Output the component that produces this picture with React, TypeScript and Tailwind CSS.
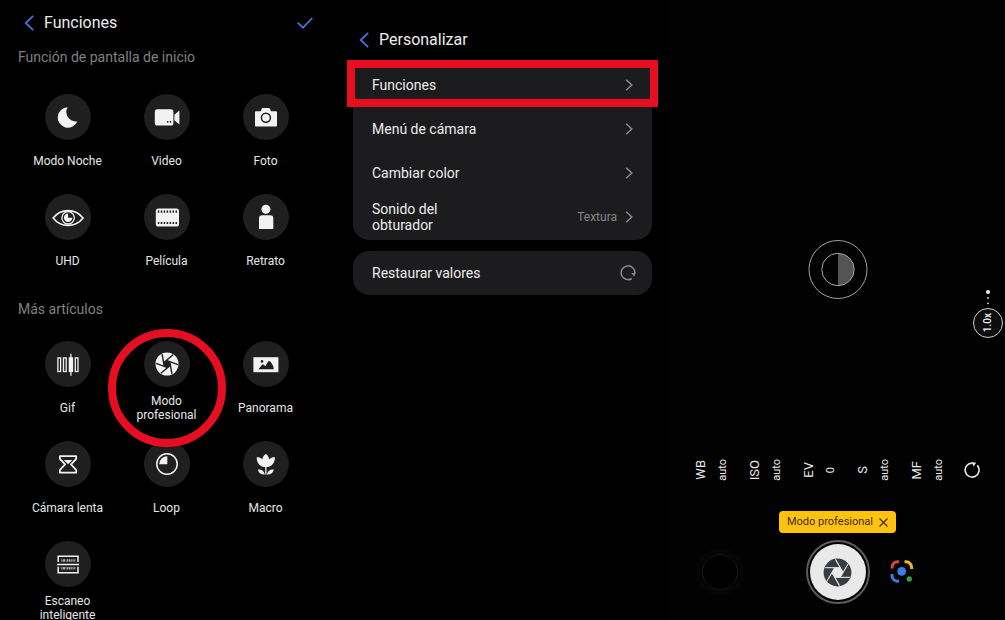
import type { ReactNode } from 'react';

const INK = '#f2f2f2';
const DISC = '#1f1f1f';

function Glyph({ children }: { children: ReactNode }) {
  return (
    <svg viewBox="0 0 46 46" className="size-[46px]" fill={INK} aria-hidden="true">
      {children}
    </svg>
  );
}

const SIXTHS = [0, 60, 120, 180, 240, 300];

type ApertureProps = { size: number; ink: string; gap: string; hole: number; line: number; turn: string };

function Aperture({ size, ink, gap, hole, line, turn }: ApertureProps) {
  const h = hole * 0.866;
  return (
    <svg viewBox="-12 -12 24 24" width={size} height={size} aria-hidden="true">
      <circle r="11.5" fill={ink} />
      <g transform={turn}>
        <polygon
          fill={gap}
          points={SIXTHS.map((a) => {
            const t = ((a + 30) * Math.PI) / 180;
            return `${hole * Math.cos(t)},${hole * Math.sin(t)}`;
          }).join(' ')}
        />
        {SIXTHS.map((a) => (
          <line
            key={a}
            x1={-h}
            y1={hole / 2}
            x2={-h}
            y2={-Math.sqrt(11 * 11 - h * h)}
            stroke={gap}
            strokeWidth={line}
            transform={`rotate(${a})`}
          />
        ))}
      </g>
    </svg>
  );
}

const icons: Record<string, ReactNode> = {
  moon: (
    <Glyph>
      <path d="M22.6 13.3A10.2 10.2 0 1 0 32.4 27.2A9.4 9.4 0 0 1 22.6 13.3Z" />
    </Glyph>
  ),
  video: (
    <Glyph>
      <rect x="10.8" y="15.3" width="18.6" height="16.2" rx="2.6" />
      <path d="M30.4 20.8L35.4 16.6V30.4L30.4 26.2Z" />
      <circle cx="23.7" cy="27.8" r="0.9" fill={DISC} />
      <circle cx="26.5" cy="27.8" r="0.9" fill={DISC} />
    </Glyph>
  ),
  camera: (
    <Glyph>
      <path d="M13 17.2H17.6L18.8 14.6Q19 14 19.7 14H25.8Q26.5 14 26.8 14.6L28 17.2H33Q34 17.2 34 18.2V31.4Q34 32.4 33 32.4H13Q12 32.4 12 31.4V18.2Q12 17.2 13 17.2Z" />
      <circle cx="22.9" cy="23.8" r="4.5" fill="none" stroke={DISC} strokeWidth="1.5" />
    </Glyph>
  ),
  eye: (
    <Glyph>
      <path
        d="M8.2 24C12 19 17 16.6 23.1 16.6C29.2 16.6 34.2 19 38 24C34.2 29 29.2 31.4 23.1 31.4C17 31.4 12 29 8.2 24Z"
        fill="none"
        stroke={INK}
        strokeWidth="1.6"
      />
      <circle cx="23.1" cy="23.8" r="6.2" fill="none" stroke={INK} strokeWidth="1.3" />
      <path d="M23.1 23.8V19.6A4.2 4.2 0 1 0 27.3 23.8Z" />
    </Glyph>
  ),
  film: (
    <Glyph>
      <rect x="11.8" y="14.4" width="23.2" height="18.2" rx="2.6" />
      <path d="M13.8 17.7H33.2M13.8 29H33.2" stroke={DISC} strokeWidth="2.2" strokeDasharray="1.5 1.45" />
    </Glyph>
  ),
  person: (
    <Glyph>
      <circle cx="22.9" cy="15.3" r="4.5" />
      <path d="M16 35V24.3Q16 21.3 19 21.3H27.3Q30.3 21.3 30.3 24.3V35Z" />
    </Glyph>
  ),
  frames: (
    <Glyph>
      <g fill="none" stroke={INK} strokeWidth="1.3">
        <rect x="12.9" y="16.9" width="2.7" height="13.6" />
        <rect x="18.5" y="16.9" width="2.7" height="13.6" />
        <rect x="30.3" y="16.9" width="2.7" height="13.6" />
        <path d="M25.9 12.7V34.7" />
      </g>
      <rect x="23.7" y="16.3" width="4.4" height="14.8" />
    </Glyph>
  ),
  aperture: <Aperture size={24} ink={INK} gap={DISC} hole={3.6} line={1.4} turn="rotate(-10)" />,
  panorama: (
    <Glyph>
      <rect x="10.4" y="16.2" width="25" height="15" />
      <path
        d="M15.4 28.3L19.2 23.8Q20 23 20.8 23.8L22.2 25.2L25 20.8Q26 19.5 27.4 20.5L29.4 23.5Q30.5 25.5 30.8 28.3Z"
        fill={DISC}
      />
      <circle cx="19" cy="20.4" r="1.3" fill={DISC} />
    </Glyph>
  ),
  hourglass: (
    <Glyph>
      <path
        d="M14.9 15.2H31.2V17.8L26 23.4L31.2 29V31.6H14.9V29L20.1 23.4L14.9 17.8Z"
        fill="none"
        stroke={INK}
        strokeWidth="1.8"
        strokeLinejoin="round"
      />
      <path d="M18.8 19H27.3L23.05 23.2Z" />
    </Glyph>
  ),
  loop: (
    <Glyph>
      <circle cx="23" cy="23" r="10.2" fill="none" stroke={INK} strokeWidth="1.5" />
      <path d="M23.3 23.3H15.2A8 8 0 0 1 23.3 15.3Z" />
    </Glyph>
  ),
  flower: (
    <Glyph>
      <path d="M22.8 13C24.8 14.4 25.9 16.2 26.2 18.2C27.8 16.6 29.8 16 32 16.2C31.7 22.6 28.4 26 22.8 26C17.2 26 13.9 22.6 13.6 16.2C15.8 16 17.8 16.6 19.4 18.2C19.7 16.2 20.8 14.4 22.8 13Z" />
      <path d="M22.2 25.5H23.5V33.6H22.2Z" />
      <path d="M14.9 28.6C18.6 28.3 21 29.8 21.8 33.5C18 33.7 15.6 32.2 14.9 28.6ZM30.8 28.6C27.1 28.3 24.7 29.8 23.9 33.5C27.7 33.7 30.1 32.2 30.8 28.6Z" />
    </Glyph>
  ),
  scan: (
    <Glyph>
      <g fill="none" stroke={INK} strokeWidth="1.5">
        <path d="M13.2 21V15.2H33V21M13.2 25.8V31.8H33V25.8M12.2 23.4H34" />
      </g>
      <g fill="none" stroke="#a8a8a8" strokeWidth="2.6" strokeDasharray="1.2 0.5 2 0.6 0.8 0.5">
        <path d="M16.3 19.5H30.3M16.3 27.3H30.3" />
      </g>
    </Glyph>
  ),
};

type Mode = { label: string; icon: string; marked?: boolean };

const homeModes: Mode[] = [
  { label: 'Modo Noche', icon: 'moon' },
  { label: 'Video', icon: 'video' },
  { label: 'Foto', icon: 'camera' },
  { label: 'UHD', icon: 'eye' },
  { label: 'Película', icon: 'film' },
  { label: 'Retrato', icon: 'person' },
];

const moreModes: Mode[] = [
  { label: 'Gif', icon: 'frames' },
  { label: 'Modo profesional', icon: 'aperture', marked: true },
  { label: 'Panorama', icon: 'panorama' },
  { label: 'Cámara lenta', icon: 'hourglass' },
  { label: 'Loop', icon: 'loop' },
  { label: 'Macro', icon: 'flower' },
  { label: 'Escaneo inteligente', icon: 'scan' },
];

function ModeGrid({ modes }: { modes: Mode[] }) {
  return (
    <div className="grid grid-cols-3 gap-y-[19px]">
      {modes.map((m) => (
        <button key={m.label} type="button" className="relative flex flex-col items-center gap-[7px]">
          <span className="flex size-[46px] items-center justify-center rounded-full bg-[#1f1f1f]">{icons[m.icon]}</span>
          <span className="flex h-7 max-w-20 items-center text-center text-[12px] leading-[14px] text-[#e6e6e6]">{m.label}</span>
          {m.marked && (
            <span className="pointer-events-none absolute -top-3 left-1/2 z-10 size-[118px] -translate-x-1/2 rounded-full border-8 border-[#e60f22]" />
          )}
        </button>
      ))}
    </div>
  );
}

function Back() {
  return (
    <button type="button" aria-label="Volver" className="flex w-2.5 items-center">
      <svg viewBox="0 0 10 16" className="h-4 w-2.5" fill="none" stroke="#4473d9" strokeWidth="1.8" aria-hidden="true">
        <path d="M9.2 0.8L1.7 8L9.2 15.2" />
      </svg>
    </button>
  );
}

function FunctionsPanel() {
  return (
    <section className="overflow-hidden pr-5 pl-[18px]">
      <header className="flex h-[45px] items-center gap-2.5 pl-1.5">
        <Back />
        <h1 className="flex-1 text-[16px] leading-5 text-[#ececec]">Funciones</h1>
        <button type="button" aria-label="Guardar" className="mr-0.5">
          <svg viewBox="0 0 16 12" className="h-3 w-4" fill="none" stroke="#4473d9" strokeWidth="1.8" aria-hidden="true">
            <path d="M0.8 5.6L6 10.7L15.3 1" />
          </svg>
        </button>
      </header>
      <h2 className="flex h-[49px] items-start pt-[3px] text-[14px] leading-[18px] text-[#808080]">Función de pantalla de inicio</h2>
      <ModeGrid modes={homeModes} />
      <h2 className="flex h-[66px] items-start pt-[25px] text-[14px] leading-[18px] text-[#808080]">Más artículos</h2>
      <ModeGrid modes={moreModes} />
    </section>
  );
}

function Chevron() {
  return (
    <svg viewBox="0 0 8 12" className="h-3 w-2" fill="none" stroke="#8a8a8c" strokeWidth="1.5" aria-hidden="true">
      <path d="M1.2 0.8L6.8 6L1.2 11.2" />
    </svg>
  );
}

const settings = [
  { label: 'Funciones', value: '', marked: true },
  { label: 'Menú de cámara', value: '' },
  { label: 'Cambiar color', value: '' },
  { label: 'Sonido del\nobturador', value: 'Textura' },
];

function SettingsPanel() {
  return (
    <section className="px-[18px] pt-[17px]">
      <header className="flex h-[45px] items-center gap-2.5 pl-1.5">
        <Back />
        <h1 className="text-[16px] leading-5 text-[#ececec]">Personalizar</h1>
      </header>
      <ul className="rounded-2xl bg-[#1c1c1e] py-px">
        {settings.map((s) => (
          <li key={s.label} className="relative">
            <button type="button" className="flex h-11 w-full items-center justify-between pr-[19px] pl-[19px] text-left">
              <span className="text-[14px] leading-4 whitespace-pre-line text-[#ececec]">{s.label}</span>
              <span className="flex items-center gap-2 text-[12px] leading-4 text-[#858587]">
                {s.value}
                <Chevron />
              </span>
            </button>
            {s.marked && <span className="pointer-events-none absolute -inset-x-1.5 -top-[3px] bottom-0 border-8 border-[#e60f22]" />}
          </li>
        ))}
      </ul>
      <button type="button" className="mt-[11px] flex h-11 w-full items-center justify-between rounded-2xl bg-[#1c1c1e] pr-4 pl-[19px]">
        <span className="text-[14px] leading-4 text-[#ececec]">Restaurar valores</span>
        <svg viewBox="0 0 16 16" className="size-4" fill="none" stroke="#8a8a8c" strokeWidth="1.5" aria-hidden="true">
          <path d="M11.8 13.5A6.9 6.9 0 1 1 14.9 8.3" />
          <path d="M11.2 8H15.8L14.2 11.4Z" fill="#8a8a8c" stroke="none" />
        </svg>
      </button>
    </section>
  );
}

const params = [
  ['WB', 'auto'],
  ['ISO', 'auto'],
  ['EV', '0'],
  ['S', 'auto'],
  ['MF', 'auto'],
];

function CameraPanel() {
  return (
    <section className="flex flex-col bg-[#020202]">
      <div className="relative flex h-[452px] justify-center pt-60">
        <svg viewBox="0 0 60 60" className="size-[60px]" fill="none" aria-hidden="true">
          <circle cx="30" cy="29.5" r="29" stroke="#a0a0a0" strokeWidth="1" />
          <path d="M30 13.5A16 16 0 0 1 30 45.5Z" fill="#545454" />
          <circle cx="30" cy="29.5" r="16.2" stroke="#a8a8a8" strokeWidth="1" />
        </svg>
        <div className="absolute top-[289px] right-0.5 flex flex-col items-center gap-[3px]">
          <svg viewBox="0 0 6 16" className="h-4 w-1.5" fill="#e8e8e8" aria-hidden="true">
            <circle cx="3" cy="3" r="2.1" />
            <circle cx="3" cy="9" r="0.9" />
            <circle cx="3" cy="14.3" r="0.9" />
          </svg>
          <button type="button" className="flex size-[30px] items-center justify-center rounded-full border border-[#d0d0d0] bg-[#0d0d0d]">
            <span className="rotate-180 text-[10px] leading-3 font-medium text-[#f0f0f0] [writing-mode:vertical-rl]">1.0x</span>
          </button>
        </div>
      </div>
      <div className="flex h-9 items-center gap-2.5 pl-5">
        {params.map(([name, value]) => (
          <button key={name} type="button" className="flex items-center text-[#e8e8e8]">
            <span className="flex w-[22px] rotate-180 items-center justify-center text-[13px] leading-[22px] [writing-mode:vertical-rl]">{name}</span>
            <span className="flex w-[22px] rotate-180 items-center justify-center text-[11px] leading-[22px] [writing-mode:vertical-rl]">{value}</span>
          </button>
        ))}
        <button type="button" aria-label="Restablecer" className="ml-1">
          <svg viewBox="0 0 16 16" className="size-4" fill="none" stroke="#e8e8e8" strokeWidth="1.6" aria-hidden="true">
            <path d="M13.3 3.4A7 7 0 1 1 8.5 1.1" />
            <path d="M7.6 0L12.2 0.8L9.6 4.5Z" fill="#e8e8e8" stroke="none" />
          </svg>
        </button>
      </div>
      <div className="flex justify-center pt-[23px]">
        <button type="button" className="flex h-[22px] items-center gap-1.5 rounded bg-[#ffc20e] px-2 text-[11px] leading-4 whitespace-nowrap text-[#3d2f0a]">
          Modo profesional
          <svg viewBox="0 0 9 9" className="size-[9px]" fill="none" stroke="#3d2f0a" strokeWidth="1.1" aria-hidden="true">
            <path d="M0.5 0.5L8.5 8.5M8.5 0.5L0.5 8.5" />
          </svg>
        </button>
      </div>
      <div className="grid grid-cols-[1fr_64px_1fr] items-center pt-[7px]">
        <button type="button" aria-label="Galería" className="ml-[26px] flex size-12 items-center justify-center rounded-full bg-[#050505]">
          <span className="size-9 rounded-full border border-[#181818] bg-black" />
        </button>
        <button type="button" aria-label="Disparar" className="flex size-16 items-center justify-center rounded-full border-2 border-[#5c5c5c]">
          <span className="flex size-14 items-center justify-center rounded-full bg-[#e9e9e9]">
            <Aperture size={29} ink="#363c3f" gap="#e9e9e9" hole={4.6} line={0.9} turn="rotate(30) scale(-1 1)" />
          </span>
        </button>
        <button type="button" aria-label="Google Lens" className="ml-5 size-6 justify-self-start">
          <svg viewBox="0 0 24 24" className="size-6" fill="none" strokeWidth="3" aria-hidden="true">
            <path d="M2 8.500V8A5.500 5.500 0 0 1 7.500 1.800H9" stroke="#d9483b" />
            <path d="M14.500 1.800H16A5.700 5.700 0 0 1 21.700 8V9" stroke="#f4b51e" />
            <path d="M2 14V15.500A5.700 5.700 0 0 0 7.500 21.200H9" stroke="#3f7de0" />
            <circle cx="11.7" cy="11.3" r="4.4" fill="#3f7de0" />
            <circle cx="19.3" cy="18.9" r="2.600" fill="#35a04f" />
          </svg>
        </button>
      </div>
    </section>
  );
}

export default function App() {
  return (
    <main className="grid h-screen grid-cols-3 overflow-hidden bg-black font-['Roboto',sans-serif]">
      <FunctionsPanel />
      <SettingsPanel />
      <CameraPanel />
    </main>
  );
}
